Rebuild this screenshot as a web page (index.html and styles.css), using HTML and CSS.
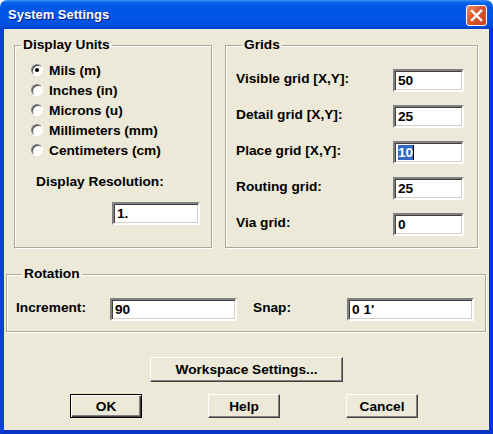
FILE: index.html
```html
<!DOCTYPE html>
<html lang="en">
<head>
    <meta charset="UTF-8">
    <title>System Settings</title>
    <link rel="stylesheet" href="styles.css">
</head>
<body>
    <div class="window">
        <div class="titlebar">
            <span class="title">System Settings</span>
            <span class="close">
                <svg width="13" height="13" viewBox="0 0 13 13"><path d="M2 2 L11 11 M11 2 L2 11" stroke="#fff" stroke-width="2.4" stroke-linecap="square"/></svg>
            </span>
        </div>
        <div class="client">
            <div class="top-row">
                <fieldset class="group units">
                    <legend>Display Units</legend>
                    <ul class="radios">
                        <li><span class="radio checked"></span>Mils (m)</li>
                        <li><span class="radio"></span>Inches (in)</li>
                        <li><span class="radio"></span>Microns (u)</li>
                        <li><span class="radio"></span>Millimeters (mm)</li>
                        <li><span class="radio"></span>Centimeters (cm)</li>
                    </ul>
                    <div class="res-label">Display Resolution:</div>
                    <div class="field res">1.</div>
                </fieldset>
                <fieldset class="group grids">
                    <legend>Grids</legend>
                    <div class="grid-row"><span class="lbl">Visible grid [X,Y]:</span><div class="field small">50</div></div>
                    <div class="grid-row"><span class="lbl">Detail grid [X,Y]:</span><div class="field small">25</div></div>
                    <div class="grid-row"><span class="lbl">Place grid [X,Y]:</span><div class="field small"><span class="sel">10</span></div></div>
                    <div class="grid-row"><span class="lbl">Routing grid:</span><div class="field small">25</div></div>
                    <div class="grid-row"><span class="lbl">Via grid:</span><div class="field small">0</div></div>
                </fieldset>
            </div>
            <fieldset class="group rotation">
                <legend>Rotation</legend>
                <div class="rot-row">
                    <span class="lbl rot-lbl">Increment:</span>
                    <div class="field wide">90</div>
                    <span class="lbl rot-lbl snap">Snap:</span>
                    <div class="field wide">0 1'</div>
                </div>
            </fieldset>
            <div class="ws-row">
                <button class="btn ws">Workspace Settings...</button>
            </div>
            <div class="btn-row">
                <button class="btn default">OK</button>
                <button class="btn">Help</button>
                <button class="btn">Cancel</button>
            </div>
        </div>
    </div>
</body>
</html>
```

FILE: styles.css
```css
body {
    margin: 0;
    background: #fff;
    font-family: "Liberation Sans", Arial, sans-serif;
    font-size: 13.7px;
    font-weight: bold;
    color: #000;
}
.window {
    width: 493px;
    height: 434px;
    display: flex;
    flex-direction: column;
}
.titlebar {
    height: 29px;
    display: flex;
    align-items: center;
    justify-content: space-between;
    padding: 0 6px 0 8px;
    box-sizing: border-box;
    border-radius: 7px 7px 0 0;
    background: linear-gradient(to bottom, #3d8df7 0%, #0868ea 9%, #0058e6 22%, #0055e5 60%, #0050e0 85%, #0042d0 100%);
}
.title {
    color: #fff;
    font-size: 13px;
    text-shadow: 1px 1px #0a1e8a;
}
.close {
    width: 19px;
    height: 19px;
    margin-top: 1px;
    border: 1px solid #fff;
    border-radius: 3px;
    background: linear-gradient(135deg, #e98a6c 0%, #d9582f 45%, #c8431c 100%);
    display: flex;
    align-items: center;
    justify-content: center;
}
.client {
    flex: 1;
    background: #ece9d8;
    border-left: 4px solid #0842d8;
    border-right: 4px solid #0831d9;
    border-bottom: 4px solid #0835c8;
}
.top-row {
    display: flex;
    gap: 13px;
    padding-left: 10px;
    margin-top: 8px;
}
.group {
    margin: 0;
    padding: 0;
    box-sizing: border-box;
    border: 1px solid #aca899;
    box-shadow: inset 1px 1px #fff, 1px 1px #fff;
}
.group legend {
    margin-left: 6px;
    padding: 0 2px;
    line-height: 16px;
}
.units {
    width: 198px;
    height: 211px;
}
.grids {
    width: 253px;
    height: 211px;
}
.radios {
    list-style: none;
    margin: 0;
    padding: 7px 0 0 16px;
}
.radios li {
    height: 20px;
    display: flex;
    align-items: center;
}
.radio {
    width: 10px;
    height: 10px;
    margin-right: 6px;
    border-radius: 50%;
    background: #fff;
    border: 1px solid;
    border-color: #808080 #fff #fff #808080;
    box-shadow: inset 1px 1px #404040;
    position: relative;
}
.radio.checked::after {
    content: "";
    position: absolute;
    left: 3px;
    top: 3px;
    width: 4px;
    height: 4px;
    border-radius: 50%;
    background: #000;
}
.res-label {
    margin: 14px 0 0 21px;
    line-height: 16px;
}
.field {
    box-sizing: border-box;
    height: 23px;
    padding-left: 3px;
    line-height: 19px;
    background: #fff;
    border: 2px solid;
    border-color: #808080 #fff #fff #808080;
    box-shadow: inset 1px 1px #404040, inset -1px -1px #d4d0c8;
}
.res {
    width: 88px;
    margin: 12px 0 0 97px;
}
.grids {
    padding: 16px 0 0 10px;
}
.grid-row {
    display: flex;
    align-items: center;
    height: 23px;
    margin-bottom: 13px;
}
.lbl {
    position: relative;
    top: -2px;
}
.grid-row .lbl {
    width: 157px;
}
.small {
    width: 71px;
}
.sel {
    background: #316ac5;
    color: #fff;
    border-right: 1px solid #000;
}
.rotation {
    width: 480px;
    height: 66px;
    margin: 18px 0 0 2px;
    padding: 16px 0 0 9px;
}
.rot-row {
    display: flex;
    align-items: center;
}
.rot-lbl {
    width: 94px;
}
.snap {
    margin-left: 16px;
}
.wide {
    width: 127px;
}
.btn {
    font-family: inherit;
    font-size: 13.7px;
    font-weight: bold;
    color: #000;
    background: #ece9d8;
    border: 1px solid;
    border-color: #fff #404040 #404040 #fff;
    box-shadow: inset -1px -1px #808080;
    padding: 0;
    box-sizing: border-box;
    width: 72px;
    height: 24px;
}
.btn.default {
    border: 1px solid #000;
    box-shadow: inset 1px 1px #fff, inset -1px -1px #404040, inset -2px -2px #808080;
}
.ws-row {
    display: flex;
    justify-content: center;
    margin-top: 25px;
}
.ws {
    width: 193px;
    height: 25px;
}
.btn-row {
    display: flex;
    gap: 66px;
    padding-left: 66px;
    margin-top: 12px;
}
```
